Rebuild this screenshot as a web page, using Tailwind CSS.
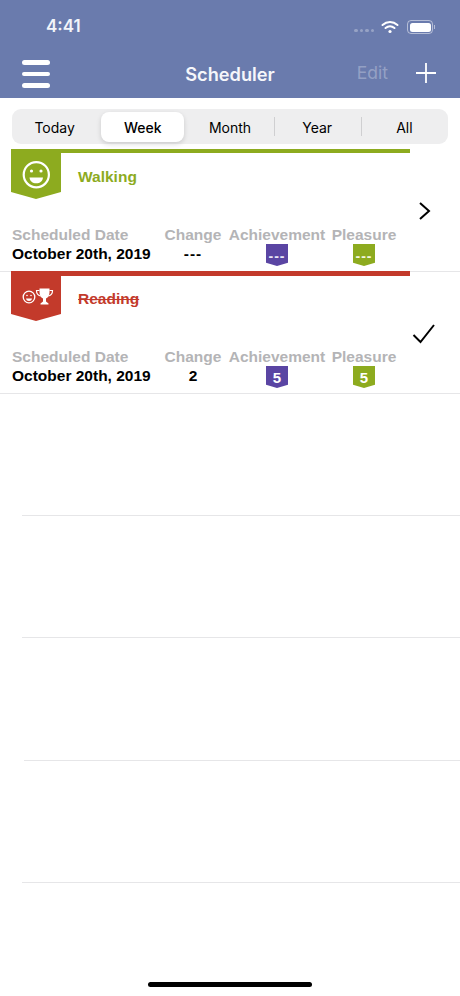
<!DOCTYPE html>
<html lang="en">
<head>
  <meta charset="UTF-8" />
  <meta name="viewport" content="width=device-width, initial-scale=1.0"/>
  <title>Scheduler</title>
  <script src="https://cdn.jsdelivr.net/npm/@tailwindcss/browser@4"></script>
</head>
<body class="relative w-[460px] h-[996px] overflow-hidden bg-white text-black font-['Liberation_Sans',Arial,sans-serif]">

  <!-- Status bar + nav -->
  <header class="h-[98px] bg-[#6a7bad] text-white">
    <div class="h-[51px] flex items-end justify-between pl-[46px] pr-[25px] pb-[15px]">
      <span class="font-['Inter',sans-serif] font-semibold text-[17px] leading-[20px] text-[#f2f4f9]">4:41</span>
      <div class="flex items-center gap-[7px] pb-[2px]">
        <div class="flex gap-[2px] mt-[7px]">
          <span class="w-[3.500px] h-[3.500px] rounded-full bg-white/30"></span>
          <span class="w-[3.500px] h-[3.500px] rounded-full bg-white/30"></span>
          <span class="w-[3.500px] h-[3.500px] rounded-full bg-white/30"></span>
          <span class="w-[3.500px] h-[3.500px] rounded-full bg-white/30"></span>
        </div>
        <svg width="18" height="14" viewBox="0 0 18 14" fill="none" stroke="white" stroke-width="2" stroke-linecap="round">
          <path d="M1.500 5C6 1 12 1 16.500 5"/>
          <path d="M4.500 8C7.200 5.800 10.800 5.800 13.500 8"/>
          <circle cx="9" cy="11.500" r="1.600" fill="white" stroke="none"/>
        </svg>
        <div class="flex items-center ml-[1px]">
          <div class="w-[26px] h-[14px] rounded-[4px] border border-white/50 p-[1.500px]">
            <div class="w-full h-full rounded-[2.500px] bg-white"></div>
          </div>
          <span class="w-[1px] h-[4px] ml-[1px] bg-white/50"></span>
        </div>
      </div>
    </div>
    <div class="relative h-[47px] flex items-center justify-between pl-[22px] pr-[24px]">
      <div class="flex flex-col gap-[7px] pb-[1px]">
        <span class="block w-[28px] h-[4.500px] rounded-full bg-white"></span>
        <span class="block w-[28px] h-[4.500px] rounded-full bg-white"></span>
        <span class="block w-[28px] h-[4.500px] rounded-full bg-white"></span>
      </div>
      <h1 class="absolute left-0 right-0 top-[10px] text-center text-[18.200px] leading-[26px] font-semibold font-['Inter',sans-serif] text-[#f5f6fa]">Scheduler</h1>
      <div class="flex items-center gap-[28px] pb-[3px]">
        <span class="font-['Inter',sans-serif] text-[17.500px] text-white/30">Edit</span>
        <svg width="20" height="20" viewBox="0 0 20 20" stroke="white" stroke-width="1.800"><path d="M10 0V20M0 10H20"/></svg>
      </div>
    </div>
  </header>

  <!-- Segmented control -->
  <nav class="mt-[11px] mx-[12px] h-[35px] rounded-[9px] bg-[#eeeeef] grid grid-cols-5 text-[14px] font-['Inter',sans-serif]">
    <div class="flex items-center justify-center pt-px pr-[2px]">Today</div>
    <div class="flex items-center justify-center mt-[3px] mb-[2px] mx-[2px] rounded-[8px] bg-white shadow-[0_2px_5px_rgba(0,0,0,0.15)] font-medium">Week</div>
    <div class="flex items-center justify-center pt-px">Month</div>
    <div class="flex items-center justify-center pt-px relative before:absolute before:left-0 before:top-[8px] before:bottom-[8px] before:w-px before:bg-[#cfcfd1]">Year</div>
    <div class="flex items-center justify-center pt-px relative before:absolute before:left-0 before:top-[8px] before:bottom-[8px] before:w-px before:bg-[#cfcfd1]">All</div>
  </nav>

  <main class="mt-[5px]">
    <!-- Walking -->
    <section class="relative h-[123px] border-b border-[#e6e6e8]">
      <div class="ml-[11px] w-[399px] h-[4px] bg-[#8dab1f]"></div>
      <svg class="absolute left-[11px] top-0" width="50" height="50" viewBox="0 0 50 50">
        <path d="M0 0H50V43L25 50L0 43Z" fill="#8dab1f"/>
        <circle cx="25.300" cy="25.700" r="12.600" fill="none" stroke="white" stroke-width="2.200"/>
        <path d="M18.500 28.500H32C31.600 32.300 29 34.300 25.250 34.300C21.500 34.300 18.900 32.300 18.500 28.500Z" fill="white"/>
        <circle cx="20.500" cy="22" r="1.600" fill="white"/>
        <circle cx="30" cy="22" r="1.600" fill="white"/>
      </svg>
      <h2 class="absolute left-[78px] top-[18px] text-[15.500px] leading-[20px] font-bold text-[#8dab1f]">Walking</h2>
      <svg class="absolute left-[418px] top-[52px]" width="13" height="20" viewBox="0 0 13 20" fill="none" stroke="black" stroke-width="2"><path d="M2 2L11 10L2 18"/></svg>
      <div class="mt-[72px] ml-[12px] grid grid-cols-[139px_84px_84px_90px] text-[15.500px] leading-[19px] font-bold">
        <div>
          <div class="text-[#b4b4b6] whitespace-nowrap">Scheduled Date</div>
          <div class="whitespace-nowrap">October 20th, 2019</div>
        </div>
        <div class="text-center">
          <div class="text-[#b4b4b6]">Change</div>
          <div class="tracking-[1px]">---</div>
        </div>
        <div class="flex flex-col items-center">
          <div class="text-[#b4b4b6]">Achievement</div>
          <div class="w-[22px] h-[22px] bg-[#5a45a3] text-[#e9e6f5] text-[14px] leading-[25px] tracking-[1px] text-center [clip-path:polygon(0_0,100%_0,100%_85%,50%_100%,0_85%)]">---</div>
        </div>
        <div class="flex flex-col items-center">
          <div class="text-[#b4b4b6]">Pleasure</div>
          <div class="w-[22px] h-[22px] bg-[#8dab1f] text-[#f2f6df] text-[14px] leading-[25px] tracking-[1px] text-center [clip-path:polygon(0_0,100%_0,100%_85%,50%_100%,0_85%)]">---</div>
        </div>
      </div>
    </section>

    <!-- Reading -->
    <section class="relative -mt-px h-[123px] border-b border-[#e6e6e8]">
      <div class="ml-[11px] w-[399px] h-[5px] bg-[#c33a2b]"></div>
      <svg class="absolute left-[11px] top-0" width="50" height="50" viewBox="0 0 50 50">
        <path d="M0 0H50V43L25 50L0 43Z" fill="#c33a2b"/>
        <circle cx="18" cy="26" r="5.800" fill="none" stroke="white" stroke-width="1.300"/>
        <circle cx="16" cy="24.500" r="0.800" fill="white"/>
        <circle cx="20" cy="24.500" r="0.800" fill="white"/>
        <path d="M15 27.500H21C20.600 29.300 19.500 30 18 30C16.500 30 15.400 29.300 15 27.500Z" fill="white"/>
        <g transform="translate(-0.500 -2.500)">
          <path d="M29 20H39V24C39 27.500 37 29.500 35.500 30V33L38 35V36H30V35L32.500 33V30C31 29.500 29 27.500 29 24Z" fill="white"/>
          <path d="M29 22H26C26 25 27.500 27 30 27.500M39 22H42C42 25 40.500 27 38 27.500" fill="none" stroke="white" stroke-width="1.200"/>
        </g>
      </svg>
      <h2 class="absolute left-[78px] top-[18px] text-[15.500px] leading-[20px] font-bold text-[#c33a2b] line-through">Reading</h2>
      <svg class="absolute left-[412px] top-[52px]" width="24" height="22" viewBox="0 0 24 22" fill="none" stroke="black" stroke-width="2"><path d="M1.500 12L8.500 19L22 2"/></svg>
      <div class="mt-[71px] ml-[12px] grid grid-cols-[139px_84px_84px_90px] text-[15.500px] leading-[19px] font-bold">
        <div>
          <div class="text-[#b4b4b6] whitespace-nowrap">Scheduled Date</div>
          <div class="whitespace-nowrap">October 20th, 2019</div>
        </div>
        <div class="text-center">
          <div class="text-[#b4b4b6]">Change</div>
          <div>2</div>
        </div>
        <div class="flex flex-col items-center">
          <div class="text-[#b4b4b6]">Achievement</div>
          <div class="w-[22px] h-[22px] bg-[#5a45a3] text-white text-[15px] leading-[23px] text-center [clip-path:polygon(0_0,100%_0,100%_85%,50%_100%,0_85%)]">5</div>
        </div>
        <div class="flex flex-col items-center">
          <div class="text-[#b4b4b6]">Pleasure</div>
          <div class="w-[22px] h-[22px] bg-[#8dab1f] text-white text-[15px] leading-[23px] text-center [clip-path:polygon(0_0,100%_0,100%_85%,50%_100%,0_85%)]">5</div>
        </div>
      </div>
    </section>

    <!-- Empty rows -->
    <div class="h-[122px] ml-[22px] border-b border-[#e6e6e8]"></div>
    <div class="h-[122px] ml-[22px] border-b border-[#e6e6e8]"></div>
    <div class="h-[123px] ml-[24px] border-b border-[#e6e6e8]"></div>
    <div class="h-[122px] ml-[22px] border-b border-[#e6e6e8]"></div>
  </main>

  <div class="absolute left-[148px] bottom-[9px] w-[164px] h-[5px] rounded-full bg-black"></div>
</body>
</html>
